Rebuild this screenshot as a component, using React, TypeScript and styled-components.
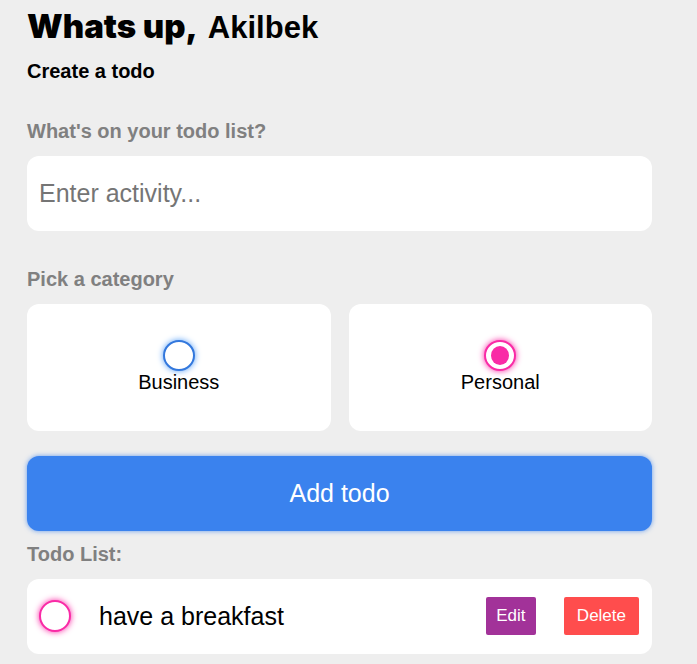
import React, { useState } from "react";
import styled, { createGlobalStyle } from "styled-components";

const PINK = "#f92ba6";
const BLUE = "#3378dd";

const GlobalStyle = createGlobalStyle`
  *, *::before, *::after { box-sizing: border-box; }
  body {
    margin: 0;
    background: #eeeeee;
    color: #000;
    font-family: "Liberation Sans", Arial, sans-serif;
  }
`;

const Page = styled.main`
  padding: 8px 45px 10px 27px;
`;

const Greeting = styled.label`
  display: flex;
  align-items: baseline;
  gap: 10px;
  height: 36px;
  line-height: 36px;
`;

const Hello = styled.span`
  flex: none;
  font-family: "Arial Black", Inter, sans-serif;
  font-size: 33px;
  font-weight: 900;
`;

const NameInput = styled.input`
  flex: 1;
  min-width: 0;
  padding: 0;
  border: 0;
  outline: 0;
  background: transparent;
  color: inherit;
  font: bold 31px "Liberation Sans", Arial, sans-serif;
`;

const SubTitle = styled.h2`
  margin: 16px 0 0;
  font-size: 20px;
  line-height: 23px;
`;

const FieldTitle = styled.label`
  display: block;
  margin: 37px 0 13px;
  color: #808080;
  font-size: 20px;
  font-weight: bold;
  line-height: 23px;
`;

const CategoryGroup = styled.fieldset`
  display: grid;
  grid-template-columns: 1fr 1fr;
  column-gap: 18px;
  margin: 37px 0 0;
  padding: 0;
  border: 0;
`;

const GroupTitle = styled.legend`
  margin: 0 0 13px;
  padding: 0;
  color: #808080;
  font-size: 20px;
  font-weight: bold;
  line-height: 23px;
`;

const ActivityInput = styled.input`
  display: block;
  width: 100%;
  height: 75px;
  padding: 0 12px;
  border: 0;
  border-radius: 12px;
  background: #fff;
  font: 25px "Liberation Sans", Arial, sans-serif;
  &::placeholder { color: #757575; }
`;

const CategoryCard = styled.label`
  display: flex;
  flex-direction: column;
  align-items: center;
  padding: 36px 12px 37px;
  border-radius: 12px;
  background: #fff;
  font-size: 20px;
  line-height: 23px;
  cursor: pointer;
`;

const Ring = styled.input<{ $color: string; $glow: string }>`
  appearance: none;
  display: grid;
  place-items: center;
  flex: none;
  width: 32px;
  height: 31px;
  margin: 0;
  border: 2px solid ${(p) => p.$color};
  border-radius: 50%;
  background: #fff;
  box-shadow: 0 0 6px ${(p) => p.$glow};
  cursor: pointer;
  &:checked::before {
    content: "";
    width: 18px;
    height: 19px;
    border-radius: 50%;
    background: ${(p) => p.$color};
  }
`;

const DoneRing = styled(Ring)`
  height: 32px;
`;

const AddButton = styled.button`
  display: block;
  width: 100%;
  height: 75px;
  margin-top: 25px;
  border: 0;
  border-radius: 12px;
  background: #3a82ee;
  color: #fff;
  font: 25px "Liberation Sans", Arial, sans-serif;
  box-shadow: 0 0 5px rgba(58, 130, 238, 0.75);
  cursor: pointer;
`;

const ListTitle = styled.h3`
  margin: 12px 0 13px;
  color: #808080;
  font-size: 20px;
  line-height: 23px;
`;

const TodoList = styled.ul`
  margin: 0;
  padding: 0;
  list-style: none;
`;

const TodoItem = styled.li`
  display: flex;
  align-items: center;
  height: 75px;
  padding: 0 13px 1px 12px;
  border-radius: 12px;
  background: #fff;
`;

const TodoText = styled.label`
  flex: 1;
  margin-left: 28px;
  font-size: 25px;
  line-height: 28px;
`;

const Actions = styled.div`
  display: flex;
  gap: 28px;
`;

const ActionButton = styled.button<{ $color: string; $pad: number }>`
  min-width: 50px;
  height: 38px;
  padding: 0 ${(p) => p.$pad}px;
  border: 0;
  border-radius: 2px;
  background: ${(p) => p.$color};
  color: #fff;
  font: 17px "Liberation Sans", Arial, sans-serif;
  cursor: pointer;
`;

export default function App() {
  const [name, setName] = useState("Akilbek");
  const [activity, setActivity] = useState("");
  const [category, setCategory] = useState("personal");

  return (
    <>
      <GlobalStyle />
      <Page>
        <Greeting>
          <Hello>Whats up,</Hello>
          <NameInput value={name} onChange={(e) => setName(e.target.value)} />
        </Greeting>
        <SubTitle>Create a todo</SubTitle>
        <form onSubmit={(e) => e.preventDefault()}>
          <FieldTitle htmlFor="activity">What's on your todo list?</FieldTitle>
          <ActivityInput
            id="activity"
            placeholder="Enter activity..."
            value={activity}
            onChange={(e) => setActivity(e.target.value)}
          />
          <CategoryGroup>
            <GroupTitle>Pick a category</GroupTitle>
            <CategoryCard>
              <Ring
                type="radio"
                name="category"
                $color={BLUE}
                $glow="#58a0f8"
                checked={category === "business"}
                onChange={() => setCategory("business")}
              />
              Business
            </CategoryCard>
            <CategoryCard>
              <Ring
                type="radio"
                name="category"
                $color={PINK}
                $glow={PINK}
                checked={category === "personal"}
                onChange={() => setCategory("personal")}
              />
              Personal
            </CategoryCard>
          </CategoryGroup>
          <AddButton type="submit">Add todo</AddButton>
        </form>
        <ListTitle>Todo List:</ListTitle>
        <TodoList>
          <TodoItem>
            <DoneRing type="checkbox" id="todo-1" $color={PINK} $glow={PINK} />
            <TodoText htmlFor="todo-1">have a breakfast</TodoText>
            <Actions>
              <ActionButton type="button" $color="#a23299" $pad={10}>Edit</ActionButton>
              <ActionButton type="button" $color="#ff4d4d" $pad={13}>Delete</ActionButton>
            </Actions>
          </TodoItem>
        </TodoList>
      </Page>
    </>
  );
}
